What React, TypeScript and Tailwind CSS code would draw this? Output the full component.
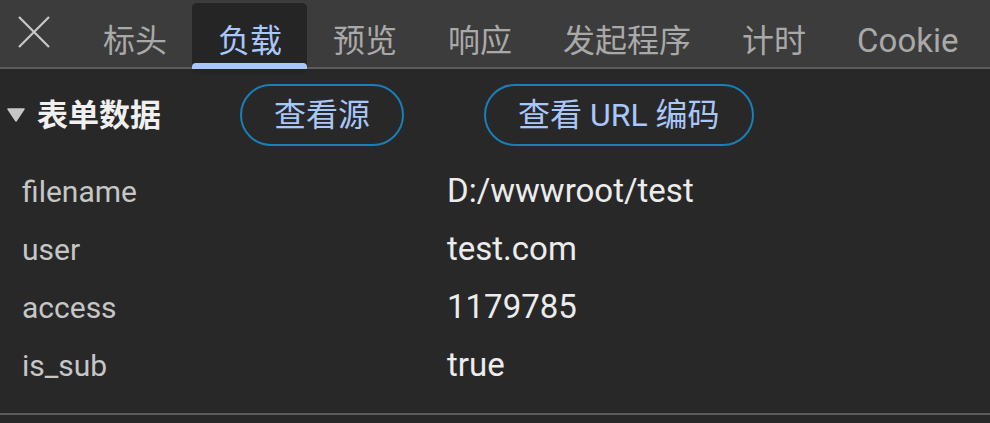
const FONT = { fontFamily: 'Roboto, "Noto Sans CJK SC", sans-serif' };

const TABS = ['标头', '负载', '预览', '响应', '发起程序', '计时', 'Cookie'];
const ACTIVE = '负载';

const ROWS: [string, string][] = [
  ['filename', 'D:/wwwroot/test'],
  ['user', 'test.com'],
  ['access', '1179785'],
  ['is_sub', 'true'],
];

function CloseIcon() {
  return (
    <svg width="34" height="32" viewBox="0 0 34 32" fill="none" stroke="#c8c8c8" strokeWidth="2.2">
      <path d="M2 1 L32 31 M32 1 L2 31" />
    </svg>
  );
}

export default function App() {
  return (
    <div className="w-[990px] h-[423px] overflow-hidden bg-[#282828]" style={FONT}>
      {/* tab strip */}
      <div className="h-[69px] bg-[#3c3c3c] border-b-2 border-[#5c5c5c] flex items-start">
        <div className="w-[77px] h-[67px] flex pl-[17px] pt-[16px]">
          <CloseIcon />
        </div>
        {TABS.map((t) =>
          t === ACTIVE ? (
            <div
              key={t}
              className="relative z-10 mt-[3px] h-[72px] pl-[26px] pr-[25px] pt-[12px] rounded-[5px] bg-[#252525] text-[#a8c7fa] text-[32px] leading-[52px]"
            >
              {t}
              <div className="absolute left-0 right-0 top-[60px] h-[6px] rounded-t-[4px] bg-[#a8c7fa]" />
            </div>
          ) : (
            <div key={t} className="h-[67px] pl-[26px] pr-[25px] pt-[15px] text-[#a9a9a9] text-[32px] leading-[52px]">
              {t === 'Cookie' ? <span className="text-[33px]">{t}</span> : t}
            </div>
          )
        )}
      </div>

      {/* section header */}
      <div className="flex items-center h-[62px] mt-[15px]">
        <svg className="ml-[7px]" width="18" height="14" viewBox="0 0 18 14">
          <path d="M1 1 H17 L9 13 Z" fill="#c6c6c6" stroke="#c6c6c6" strokeWidth="1.5" strokeLinejoin="round" />
        </svg>
        <span className="ml-[12px] text-[31px] font-bold text-[#f0f0f0] leading-none">表单数据</span>
        <button className="ml-[79px] h-[62px] px-[32px] rounded-full border-2 border-[#1a7fb8] text-[#a8c7fa] text-[32px] leading-none">
          查看源
        </button>
        <button className="ml-[80px] h-[62px] px-[32px] rounded-full border-2 border-[#1a7fb8] text-[#a8c7fa] text-[32px] leading-none">
          查看 URL 编码
        </button>
      </div>

      {/* form data */}
      <div className="mt-[16px] pb-[19px] border-b-2 border-[#5c5c5c]">
        {ROWS.map(([k, v]) => (
          <div key={k} className="flex items-center h-[58px] text-[30px]">
            <span className="w-[447px] pl-[22px] text-[#c6c6c6]">{k}</span>
            <span className="text-[#ececec] text-[33px]">{v}</span>
          </div>
        ))}
      </div>
    </div>
  );
}
